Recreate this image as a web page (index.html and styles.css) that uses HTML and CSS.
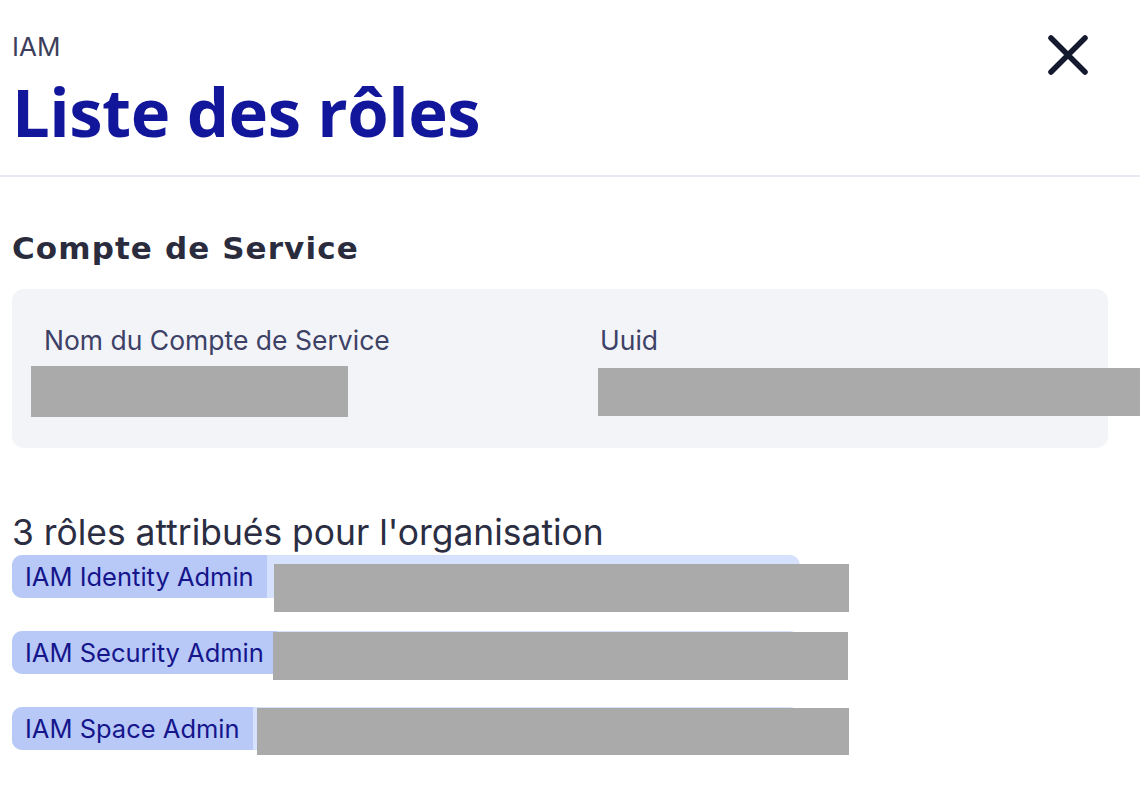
FILE: index.html
```html
<!doctype html>
<html lang="fr">

	<head>
		<meta charset="UTF-8">
		<title>Liste des rôles</title>
		<link rel="stylesheet" href="styles.css">
	</head>

	<body>
		<div class="panel">
			<div class="panel-head">
				<div class="head-titles">
					<p class="eyebrow">IAM</p>
					<h1 class="title">Liste des rôles</h1>
				</div>
				<a href="javascript:;" class="close" title="Fermer">
					<svg width="42" height="42" viewBox="0 0 42 42">
						<path d="M4 4 L38 38 M38 4 L4 38" stroke="#141a2e" stroke-width="5.5" stroke-linecap="round" fill="none" />
					</svg>
				</a>
			</div>

			<div class="panel-body">
				<h2 class="section-title">Compte de Service</h2>
				<div class="info-card">
					<div class="info-item">
						<span class="info-label">Nom du Compte de Service</span>
						<span class="redacted redacted-name"></span>
					</div>
					<div class="info-item">
						<span class="info-label">Uuid</span>
						<span class="redacted redacted-uuid"></span>
					</div>
				</div>

				<h3 class="roles-title">3 rôles attribués pour l'organisation</h3>
				<ul class="roles">
					<li class="role">
						<span class="role-name">IAM Identity Admin</span>
						<span class="redacted redacted-role1"></span>
					</li>
					<li class="role">
						<span class="role-name">IAM Security Admin</span>
						<span class="redacted redacted-role2"></span>
					</li>
					<li class="role">
						<span class="role-name">IAM Space Admin</span>
						<span class="redacted redacted-role3"></span>
					</li>
				</ul>
			</div>
		</div>
	</body>

</html>
```

FILE: styles.css
```css
body,
h1,
h2,
h3,
p,
ul,
li {
	margin: 0;
	padding: 0;
}

body {
	background: #ffffff;
	font-family: "Inter", "Noto Sans", sans-serif;
	overflow: hidden;
}

ul,
li {
	list-style: none;
}

.panel-head {
	display: flex;
	justify-content: space-between;
	align-items: flex-start;
	padding: 31px 51px 0 12px;
	height: 144px;
	border-bottom: 2px solid #e6e8f4;
}

.eyebrow {
	font-size: 26px;
	line-height: 32px;
	color: #3d3f5c;
}

.title {
	margin-top: 8px;
	font-family: "Open Sans", sans-serif;
	font-weight: 700;
	font-size: 67px;
	line-height: 80px;
	color: #12169a;
	letter-spacing: -0.5px;
}

.close {
	display: block;
	margin-top: 3px;
}

.panel-body {
	padding: 49px 12px 0 12px;
}

.section-title {
	font-family: "DejaVu Sans", sans-serif;
	font-weight: 700;
	font-size: 31px;
	line-height: 44px;
	letter-spacing: 1.1px;
	color: #2a2c3d;
}

.info-card {
	display: grid;
	grid-template-columns: 556px 1fr;
	width: 1096px;
	height: 159px;
	box-sizing: border-box;
	margin-top: 19px;
	padding: 35px 0 0 32px;
	background: #f3f4f8;
	border-radius: 12px;
}

.info-item {
	display: flex;
	flex-direction: column;
	align-items: flex-start;
}

.info-label {
	font-size: 26.5px;
	line-height: 32px;
	color: #3d4166;
}

.redacted {
	display: block;
	flex-shrink: 0;
	background: #aaaaaa;
}

.redacted-name {
	width: 317px;
	height: 51px;
	margin: 10px 0 0 -13px;
}

.redacted-uuid {
	width: 560px;
	height: 48px;
	margin: 12px 0 0 -2px;
}

.roles-title {
	margin-top: 65px;
	font-weight: 400;
	font-size: 35.4px;
	line-height: 40px;
	color: #2b2d42;
}

.roles {
	margin-top: 2px;
}

.role {
	display: flex;
	align-items: flex-start;
	width: 788px;
	height: 43px;
	margin-bottom: 33px;
	background: #d6e2fd;
	border-radius: 10px 10px 0 10px;
}

.role-name {
	display: block;
	height: 43px;
	line-height: 43px;
	padding: 0 13px 0 13px;
	font-size: 25.5px;
	color: #15158c;
	background: #b8c9f8;
	border-radius: 10px 0 0 10px;
	white-space: nowrap;
}

.redacted-role1 {
	width: 575px;
	height: 48px;
	margin: 9px 0 0 7px;
}

.redacted-role2 {
	width: 575px;
	height: 48px;
	margin: 1px 0 0 -4px;
}

.redacted-role3 {
	width: 592px;
	height: 47px;
	margin: 1px 0 0 4px;
}
```
